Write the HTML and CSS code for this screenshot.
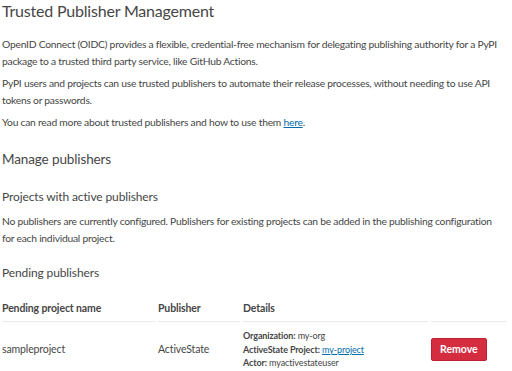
FILE: index.html
```html
<!DOCTYPE html>
<html lang="en">
<head>
    <meta charset="UTF-8">
    <title>Trusted Publisher Management</title>
    <link rel="stylesheet" href="styles.css">
</head>
<body>
    <div class="page">
        <h1>Trusted Publisher Management</h1>
        <p>OpenID Connect (OIDC) provides a flexible, credential-free mechanism for delegating publishing authority for a PyPI package to a trusted third party service, like GitHub Actions.</p>
        <p>PyPI users and projects can use trusted publishers to automate their release processes, without needing to use API tokens or passwords.</p>
        <p>You can read more about trusted publishers and how to use them <a href="#">here</a>.</p>

        <h2>Manage publishers</h2>

        <h3>Projects with active publishers</h3>
        <p>No publishers are currently configured. Publishers for existing projects can be added in the publishing configuration for each individual project.</p>

        <h3 class="pending-title">Pending publishers</h3>
        <table class="table">
            <thead>
                <tr>
                    <th class="col-name">Pending project name</th>
                    <th class="col-pub">Publisher</th>
                    <th class="col-details">Details</th>
                    <th class="col-action"></th>
                </tr>
            </thead>
            <tbody>
                <tr>
                    <td>sampleproject</td>
                    <td>ActiveState</td>
                    <td class="details">
                        <div><strong>Organization:</strong> my-org</div>
                        <div><strong>ActiveState Project:</strong> <a href="#">my-project</a></div>
                        <div><strong>Actor:</strong> myactivestateuser</div>
                    </td>
                    <td><button class="button-danger">Remove</button></td>
                </tr>
            </tbody>
        </table>
    </div>
</body>
</html>
```

FILE: styles.css
```css
body {
    margin: 0;
    font-family: Lato, "Liberation Sans", sans-serif;
    color: #464646;
    background: #fff;
    letter-spacing: -0.12px;
}
.page {
    padding: 0 8px 0 2px;
}
h1 {
    font-size: 16px;
    font-weight: 400;
    letter-spacing: -0.2px;
    margin: 0 0 14px;
    line-height: 22px;
}
p {
    font-size: 10.3px;
    letter-spacing: -0.24px;
    line-height: 17px;
    margin: 0 0 5px;
}
a {
    color: #006dad;
}
h2 {
    font-size: 13.5px;
    font-weight: 400;
    margin: 18px 0 19px;
    line-height: 20px;
}
h3 {
    font-size: 12px;
    font-weight: 400;
    margin: 0 0 7px;
    line-height: 18px;
}
.pending-title {
    margin-top: 17px;
    margin-bottom: 8px;
}
.table {
    width: calc(100% + 9px);
    border-collapse: separate;
    border-spacing: 3px 0;
    margin: 0 -6px 0 -3px;
    font-size: 10.5px;
}
.table th {
    text-align: left;
    font-weight: 700;
    line-height: 14px;
    padding: 11px 0 6px;
    border-bottom: 1px solid #ebebeb;
}
.col-name { width: 153px; }
.col-pub { width: 82px; }
.col-details { width: 185px; }
.table td {
    padding: 7px 0 0;
    vertical-align: middle;
}
.details {
    font-size: 9px;
    line-height: 13.5px;
}
.button-danger {
    font-family: inherit;
    font-size: 10.5px;
    font-weight: 700;
    line-height: 13px;
    color: #fff;
    background: #d52d40;
    border: 1px solid #c01f31;
    border-radius: 2px;
    padding: 4px 8px;
}
```
